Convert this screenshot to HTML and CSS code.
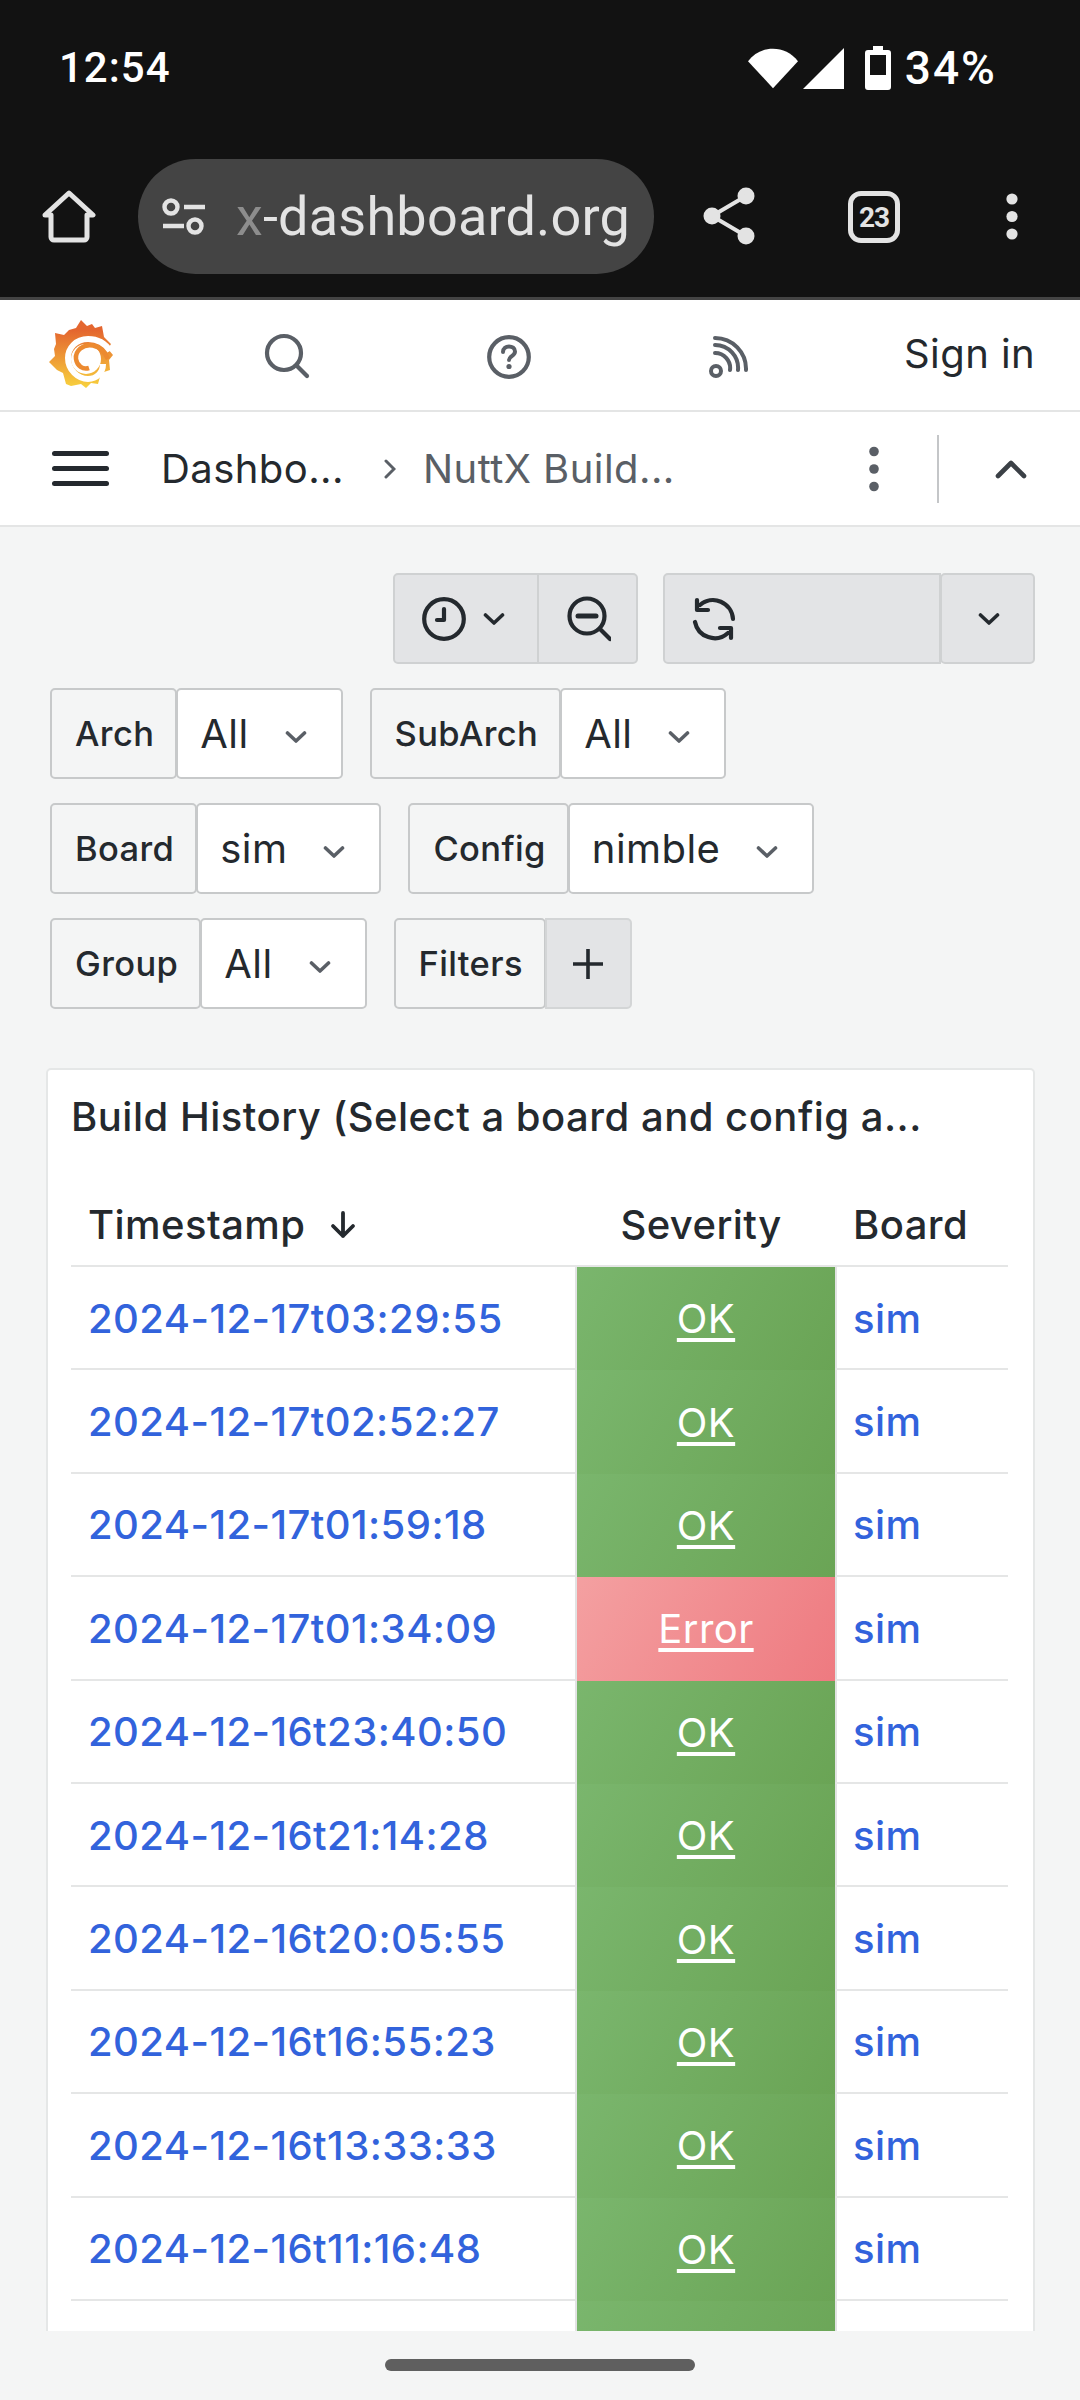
FILE: index.html
```html
<!DOCTYPE html>
<html lang="en">
<head>
  <meta charset="UTF-8">
  <title>NuttX Build History</title>
  <meta name="viewport" content="width=device-width, initial-scale=1.0">
  <link rel="stylesheet" href="styles.css">
</head>
<body>
  <svg class="defs" width="0" height="0">
    <symbol id="chev" viewBox="0 0 22 12"><path d="M2.5 2 11 10 19.5 2" fill="none" stroke="currentColor" stroke-width="3.6" stroke-linecap="round" stroke-linejoin="round"/></symbol>
    <linearGradient id="logoGrad" x1="0" y1="0" x2="0" y2="1"><stop offset="0.15" stop-color="#e4662f"/><stop offset="1" stop-color="#f8d23e"/></linearGradient>
  </svg>

  <div class="phone">
    <!-- android status bar + chrome toolbar -->
    <div class="status">
      <span class="clock">12:54</span>
      <div class="status-right">
        <svg width="50" height="42" viewBox="0 0 52 42"><path d="M0 14C7 5 16 1 26 1s19 4 26 13L26 42Z" fill="#fff"/></svg>
        <svg class="ic-signal" width="41" height="41" viewBox="0 0 42 42"><path d="M42 0V42H0Z" fill="#fff"/></svg>
        <svg class="ic-batt" width="26" height="44" viewBox="0 0 26 44"><path fill-rule="evenodd" d="M8 0h10v4h5a3 3 0 0 1 3 3v34a3 3 0 0 1-3 3H3a3 3 0 0 1-3-3V7a3 3 0 0 1 3-3h5ZM5 9v20h16V9Z" fill="#fff"/></svg>
        <span class="pct">34%</span>
      </div>
    </div>
    <div class="toolbar">
      <svg class="ic-home" width="54" height="54" viewBox="0 0 54 54"><path d="M3 25 27 3l24 22h-6v22a3 3 0 0 1-3 3H12a3 3 0 0 1-3-3V25Z" fill="none" stroke="#e3e3e3" stroke-width="5" stroke-linejoin="round"/></svg>
      <div class="url">
        <svg width="44" height="38" viewBox="0 0 44 38"><g fill="none" stroke="#e3e3e3" stroke-width="4.4"><circle cx="9" cy="9" r="6.5"/><circle cx="33" cy="28" r="6.5"/><path d="M22 9h21M1 28h21"/></g></svg>
        <span class="url-text"><span class="url-fade">x</span>-dashboard.org</span>
      </div>
      <svg class="ic-share" width="52" height="58" viewBox="0 0 52 58"><g fill="#e3e3e3"><circle cx="43" cy="9" r="8.5"/><circle cx="9" cy="29" r="8.5"/><circle cx="43" cy="49" r="8.5"/></g><path d="M43 9 9 29l34 20" fill="none" stroke="#e3e3e3" stroke-width="4"/></svg>
      <div class="tabs">23</div>
      <svg class="ic-more" width="12" height="50" viewBox="0 0 12 50"><g fill="#e3e3e3"><circle cx="6" cy="6" r="5.6"/><circle cx="6" cy="23.5" r="5.6"/><circle cx="6" cy="41" r="5.6"/></g></svg>
    </div>

    <!-- grafana top nav -->
    <div class="topnav">
      <svg class="logo" width="70" height="72" viewBox="24 8 62 72">
        <path d="M52 10 58 16 63 14 66 18 73 16 75 27 82 34 79 39 84 45 80 50 81 60 72 63 69 74 62 73 57 78 52 74 42 76 37 74 34 63 28 60 20 52 26 46 25 39 27 34 26 23 35 25 40 20 47 18Z" fill="url(#logoGrad)"/>
        <path d="M81 41C76 33 68 29 59 29 47 29 39 38 39 48 39 60 49 69 59 69 68 69 74 62 74 54" fill="none" stroke="#fff" stroke-width="6"/>
        <circle cx="57" cy="49" r="15" fill="#fff"/>
        <path d="M79 49C76 42 71 37 64 35.5 54 33.5 46 41 47 49 48 56 54 60 60 58" fill="none" stroke="#ec8a30" stroke-width="4.5"/>
      </svg>
      <svg class="ic-search" width="46" height="46" viewBox="0 0 46 46"><g fill="none" stroke="#5a5f66" stroke-width="4.2" stroke-linecap="round"><circle cx="20" cy="20" r="17"/><path d="m33 33 10 10"/></g></svg>
      <svg class="ic-help" width="44" height="44" viewBox="0 0 44 44"><circle cx="22" cy="22" r="19.8" fill="none" stroke="#5a5f66" stroke-width="4.2"/><path d="M16 17c0-4 3-5.600 6-5.600s6 1.800 6 5c0 4.600-6 4.600-6 8.600" fill="none" stroke="#5a5f66" stroke-width="4" stroke-linecap="round"/><circle cx="22" cy="31.5" r="2.6" fill="#5a5f66"/></svg>
      <svg class="ic-rss" width="42" height="44" viewBox="0 0 42 44"><g fill="none" stroke="#5a5f66" stroke-width="4" stroke-linecap="round"><circle cx="8" cy="35" r="5"/><path d="M7 17a15 15 0 0 1 15 17M7 9a23 23 0 0 1 23 25M7 2a31 31 0 0 1 31 32"/></g></svg>
      <span class="signin">Sign in</span>
    </div>

    <div class="subnav">
      <div class="burger"><i></i><i></i><i></i></div>
      <span class="crumb">Dashbo...</span>
      <svg class="crumb-sep" width="12" height="20" viewBox="0 0 12 20"><path d="M2 2 10 10 2 18" fill="none" stroke="#5a5f66" stroke-width="3" stroke-linecap="round"/></svg>
      <span class="crumb crumb-cur">NuttX Build...</span>
      <svg class="sub-more" width="12" height="46" viewBox="0 0 12 46"><g fill="#5a5f66"><circle cx="6" cy="5.5" r="4.8"/><circle cx="6" cy="23" r="4.8"/><circle cx="6" cy="40.5" r="4.8"/></g></svg>
      <div class="sub-divider"></div>
      <svg class="sub-caret" width="32" height="20" viewBox="0 0 32 20"><path d="M3 17 16 4l13 13" fill="none" stroke="#3b4046" stroke-width="4.6" stroke-linecap="round" stroke-linejoin="round"/></svg>
    </div>

    <div class="main">
      <div class="tools">
        <div class="btn-group">
          <div class="tbtn tbtn-time">
            <svg width="44" height="44" viewBox="0 0 44 44"><g fill="none" stroke="#24292e" stroke-width="4.2" stroke-linecap="round" stroke-linejoin="round"><circle cx="22" cy="22" r="19.8"/><path d="M22 12v11h-7"/></g></svg>
            <svg class="chev-dark" width="22" height="12"><use href="#chev"/></svg>
          </div>
          <div class="tbtn tbtn-zoom">
            <svg width="44" height="46" viewBox="0 0 44 46"><g fill="none" stroke="#24292e" stroke-width="4.2" stroke-linecap="round"><circle cx="20" cy="20" r="17.5"/><path d="M11 20h18" stroke-width="5"/><path d="m33 33 10 10"/></g></svg>
          </div>
        </div>
        <div class="btn-group">
          <div class="tbtn tbtn-wide">
            <svg width="44" height="44" viewBox="0 0 44 44"><g fill="none" stroke="#24292e" stroke-width="4.2" stroke-linecap="round" stroke-linejoin="round"><path d="M3 25A20 20 0 0 0 36 36M41 22A20 20 0 0 0 8 8"/><path d="M5 3v10h11M39 41V31H28"/></g></svg>
          </div>
          <div class="tbtn tbtn-more"><svg class="chev-dark" width="22" height="12"><use href="#chev"/></svg></div>
        </div>
      </div>

      <div class="vars">
        <div class="var"><span class="var-label">Arch</span><span class="var-value">All<svg width="22" height="12"><use href="#chev"/></svg></span></div>
        <div class="var"><span class="var-label">SubArch</span><span class="var-value">All<svg width="22" height="12"><use href="#chev"/></svg></span></div>
      </div>
      <div class="vars">
        <div class="var"><span class="var-label">Board</span><span class="var-value">sim<svg width="22" height="12"><use href="#chev"/></svg></span></div>
        <div class="var"><span class="var-label">Config</span><span class="var-value">nimble<svg width="22" height="12"><use href="#chev"/></svg></span></div>
      </div>
      <div class="vars">
        <div class="var"><span class="var-label">Group</span><span class="var-value">All<svg width="22" height="12"><use href="#chev"/></svg></span></div>
        <div class="var"><span class="var-label">Filters</span><span class="var-add"><svg width="32" height="32" viewBox="0 0 32 32"><path d="M16 1v30M1 16h30" stroke="#24292e" stroke-width="3.6"/></svg></span></div>
      </div>

      <div class="panel">
        <div class="panel-title">Build History (Select a board and config a...</div>
        <div class="thead">
          <div class="th th-time">Timestamp<svg width="26" height="28" viewBox="0 0 26 28"><path d="M13 2v23M3 15l10 10 10-10" fill="none" stroke="#24292e" stroke-width="3.8" stroke-linecap="round" stroke-linejoin="round"/></svg></div>
          <div class="th th-sev">Severity</div>
          <div class="th th-board">Board</div>
        </div>
        <div class="row"><a class="cell">2024-12-17t03:29:55</a><a class="sev ok">OK</a><a class="cell">sim</a></div>
        <div class="row"><a class="cell">2024-12-17t02:52:27</a><a class="sev ok">OK</a><a class="cell">sim</a></div>
        <div class="row"><a class="cell">2024-12-17t01:59:18</a><a class="sev ok">OK</a><a class="cell">sim</a></div>
        <div class="row"><a class="cell">2024-12-17t01:34:09</a><a class="sev err">Error</a><a class="cell">sim</a></div>
        <div class="row"><a class="cell">2024-12-16t23:40:50</a><a class="sev ok">OK</a><a class="cell">sim</a></div>
        <div class="row"><a class="cell">2024-12-16t21:14:28</a><a class="sev ok">OK</a><a class="cell">sim</a></div>
        <div class="row"><a class="cell">2024-12-16t20:05:55</a><a class="sev ok">OK</a><a class="cell">sim</a></div>
        <div class="row"><a class="cell">2024-12-16t16:55:23</a><a class="sev ok">OK</a><a class="cell">sim</a></div>
        <div class="row"><a class="cell">2024-12-16t13:33:33</a><a class="sev ok">OK</a><a class="cell">sim</a></div>
        <div class="row"><a class="cell">2024-12-16t11:16:48</a><a class="sev ok">OK</a><a class="cell">sim</a></div>
        <div class="row"><a class="cell"></a><a class="sev ok"></a><a class="cell"></a></div>
      </div>
    </div>

    <div class="navbar"><div class="nav-pill"></div></div>
  </div>
</body>
</html>
```

FILE: styles.css
```css
* { box-sizing: border-box; }
html, body { margin: 0; padding: 0; }
body { font-family: Inter, "Noto Sans", sans-serif; color: #24292e; background: #f4f5f5; letter-spacing: 0.43px; }
svg { display: block; flex: none; }
.defs { position: absolute; }
.phone { width: 1080px; height: 2400px; display: flex; flex-direction: column; overflow: hidden; }

/* status bar */
.status { height: 135px; flex: none; background: #121212; color: #fff; display: flex; align-items: flex-start; justify-content: space-between; padding: 46px 83px 0 59px; font-family: Roboto, sans-serif; }
.clock { font-size: 42px; line-height: 44px; font-weight: 500; letter-spacing: 1px; }
.status-right { display: flex; align-items: center; }
.ic-signal { margin-left: 5px; }
.ic-batt { margin-left: 21px; }
.pct { font-size: 46px; line-height: 44px; margin-left: 14px; letter-spacing: 2px; font-weight: 500; }

/* browser toolbar */
.toolbar { height: 165px; flex: none; background: #121212; border-bottom: 3px solid #444; display: flex; align-items: flex-start; padding-top: 24px; }
.ic-home { margin: 31px 0 0 42px; }
.url { width: 516px; height: 115px; margin-left: 42px; border-radius: 58px; background: #444; display: flex; align-items: center; padding-left: 24px; color: #e3e3e3; }
.url-text { font-family: Roboto, sans-serif; font-size: 54px; letter-spacing: 0.2px; margin-left: 30px; white-space: nowrap; }
.url-fade { color: #8d8d8d; }
.ic-share { margin: 28px 0 0 49px; }
.tabs { width: 52px; height: 52px; margin: 32px 0 0 93px; border: 5px solid #e3e3e3; border-radius: 13px; color: #e3e3e3; font-family: Roboto, sans-serif; font-size: 28px; font-weight: 700; letter-spacing: -1px; display: flex; align-items: center; justify-content: center; }
.ic-more { margin: 34px 0 0 106px; }

/* grafana nav */
.topnav { height: 112px; flex: none; background: #fff; border-bottom: 2px solid #e4e5e5; display: flex; align-items: center; padding-left: 49px; }
.logo { margin-top: -2px; }
.ic-search { margin: 2px 0 0 145px; }
.ic-help { margin: 4px 0 0 177px; }
.ic-rss { margin: 6px 0 0 177px; }
.signin { font-size: 40px; margin-left: 154px; margin-top: -4px; white-space: nowrap; }

.subnav { height: 115px; flex: none; background: #fff; border-bottom: 2px solid #e4e5e5; display: flex; align-items: center; padding-left: 52px; }
.burger { width: 57px; display: flex; flex-direction: column; gap: 10px; }
.burger i { display: block; height: 5px; border-radius: 3px; background: #24292e; }
.crumb { font-size: 40px; white-space: nowrap; margin-left: 52px; }
.crumb-cur { color: #5a5f66; margin-left: 27px; }
.crumb-sep { margin-left: 40px; }
.sub-more { margin-left: auto; }
.sub-divider { width: 2px; height: 68px; background: #c4c6c8; margin-left: 57px; }
.sub-caret { margin: 0 53px 0 56px; }

/* dashboard */
.main { flex: 1; min-height: 0; overflow: hidden; padding: 46px 45px 0 50px; display: flex; flex-direction: column; gap: 24px; }
.tools { display: flex; justify-content: flex-end; gap: 25px; flex: none; }
.btn-group { display: flex; height: 91px; }
.tbtn { background: #e3e4e6; border: 2px solid #cfd1d2; display: flex; align-items: center; }
.tbtn-time { width: 145px; padding-left: 27px; gap: 17px; border-radius: 5px 0 0 5px; border-right-width: 1px; }
.tbtn-zoom { width: 100px; padding-left: 28px; border-radius: 0 5px 5px 0; border-left-width: 1px; }
.tbtn-wide { width: 278px; padding-left: 27px; border-radius: 5px 0 0 5px; }
.tbtn-more { width: 95px; padding-left: 36px; border-radius: 5px; margin-left: -1px; }
.chev-dark { color: #24292e; }

.vars { display: flex; gap: 27px; height: 91px; flex: none; }
.var { display: flex; }
.var-label { font-size: 34.5px; font-weight: 500; letter-spacing: 0.37px; padding: 0 21px 0 23px; display: flex; align-items: center; background: #f4f5f5; border: 2px solid #c7c9ca; border-radius: 5px; white-space: nowrap; }
.var-value { font-size: 40px; padding: 0 34px 0 22px; display: flex; align-items: center; gap: 36px; background: #fff; border: 2px solid #c7c9ca; border-radius: 5px; margin-left: -1px; white-space: nowrap; }
.var-value svg { color: #5a5f66; margin-top: 6px; }
.var-add { width: 87px; background: #e3e4e6; border: 2px solid #d3d5d6; border-radius: 0 5px 5px 0; display: flex; align-items: center; justify-content: center; margin-left: -1px; }

.panel { flex: none; margin: 35px 0 0 -4px; background: #fff; border: 2px solid #e5e7e7; border-radius: 5px; padding: 0 25px 0 23px; }
.panel-title { height: 92px; font-size: 40px; font-weight: 500; letter-spacing: 0.5px; display: flex; align-items: center; white-space: nowrap; }
.thead, .row { display: grid; grid-template-columns: 506px 258px 173px; }
.thead { height: 105px; align-items: end; border-bottom: 2px solid #e5e6e6; padding-bottom: 19px; font-size: 40px; font-weight: 500; }
.th { line-height: 42px; white-space: nowrap; }
.th-time { padding-left: 17px; display: flex; align-items: center; gap: 25px; }
.th-sev { text-align: center; padding-right: 10px; }
.th-board { padding-left: 18px; }
.row { height: 103.4px; }
.cell { padding: 1px 0 0 17px; display: flex; align-items: center; color: #3263dc; font-size: 40px; font-weight: 500; border-bottom: 2px solid #e5e6e6; white-space: nowrap; }
.row .cell:last-child { padding-left: 18px; }
.sev { display: flex; align-items: center; justify-content: center; color: #fff; font-size: 40px; text-decoration: underline; text-decoration-thickness: 4px; text-underline-offset: 5px; box-shadow: -2px 0 0 #e2e3e3, 2px 0 0 #e2e3e3; }
.ok { background: linear-gradient(120deg, #7ab66d, #6aa455); }
.err { background: linear-gradient(120deg, #f4a0a1, #ee7a80); }

.navbar { height: 69px; flex: none; background: #f4f5f5; padding-top: 28px; }
.nav-pill { width: 310px; height: 12px; margin: 0 auto; border-radius: 6px; background: #5f5f5f; }
```
